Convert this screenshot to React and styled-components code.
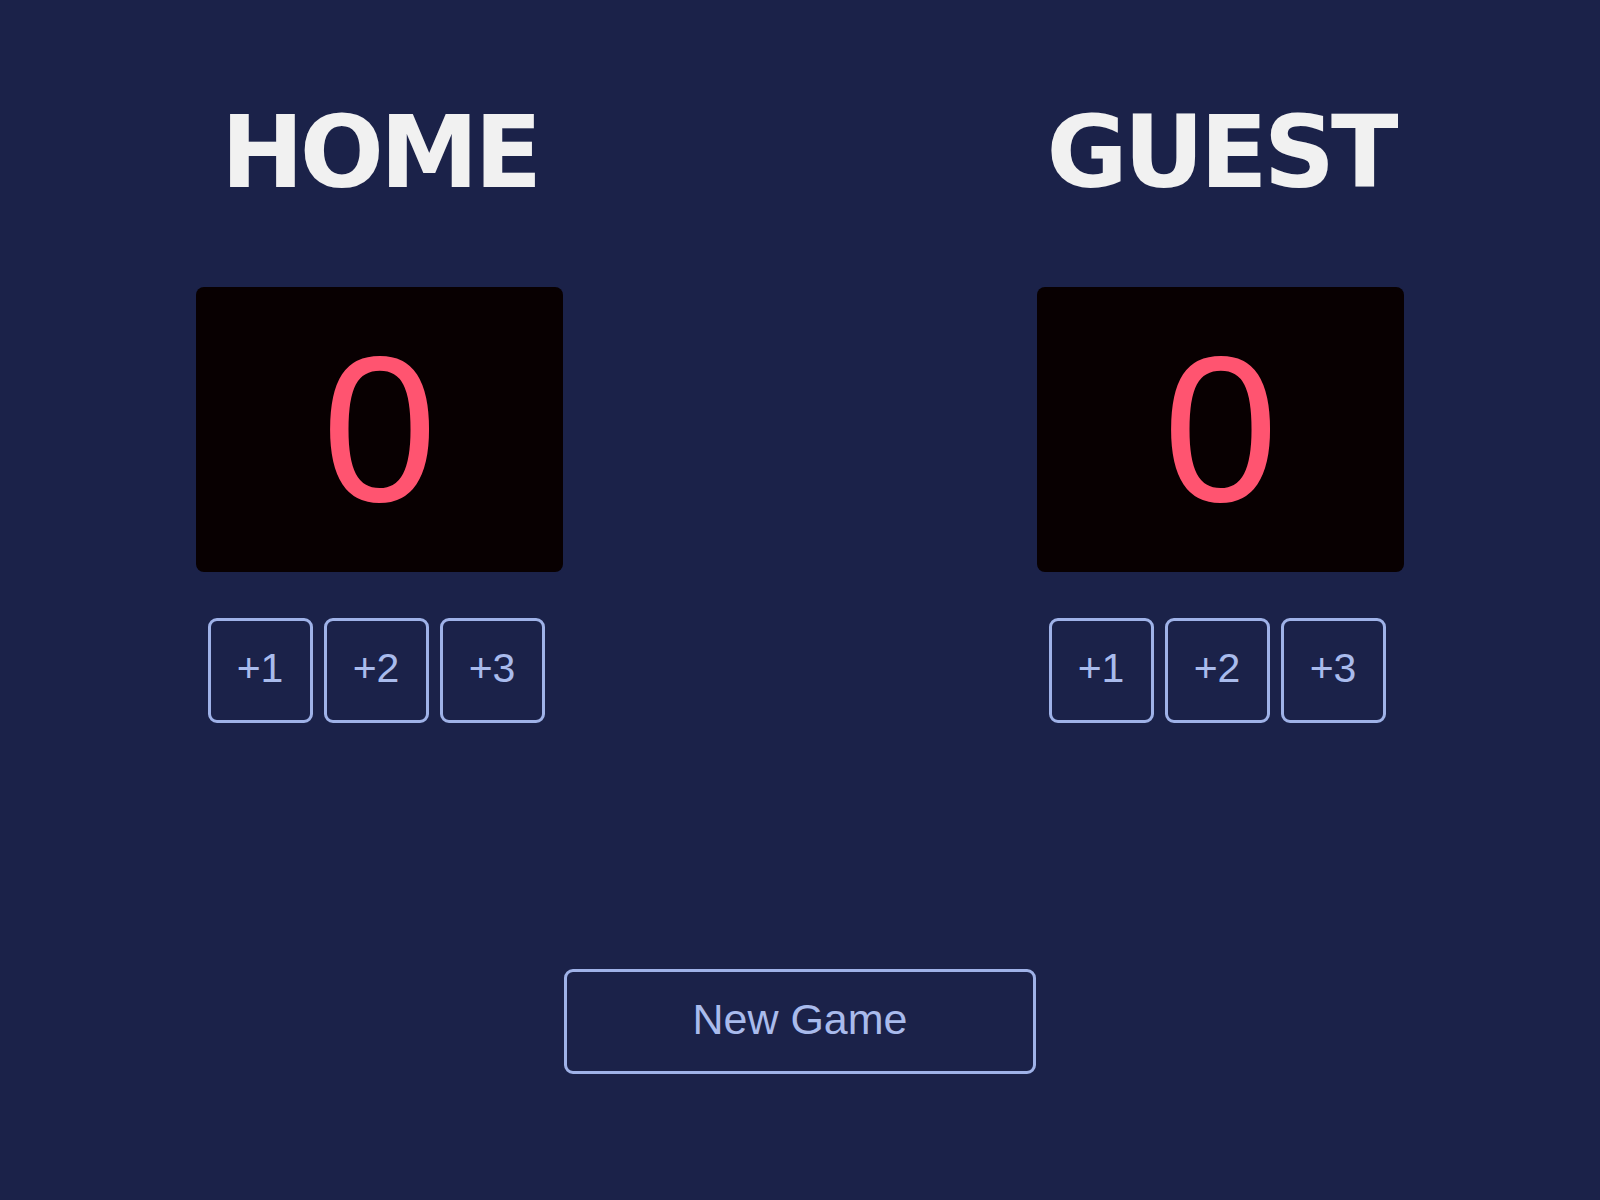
import styled, { createGlobalStyle } from "styled-components";

const GlobalStyle = createGlobalStyle`
  body {
    margin: 0;
    background: #1b2249;
  }
`;

const Page = styled.div`
  display: flex;
  flex-direction: column;
  align-items: center;
  width: 1600px;
  min-height: 1200px;
  padding-top: 103px;
  box-sizing: border-box;
  background: #1b2249;
`;

const Board = styled.div`
  display: flex;
  justify-content: center;
  gap: 474px;
`;

const Team = styled.div`
  display: flex;
  flex-direction: column;
  align-items: center;
  width: 367px;
`;

const TeamName = styled.h2`
  margin: 0;
  color: #f1f1f1;
  font-family: "DejaVu Sans", Verdana, sans-serif;
  font-size: 99px;
  font-weight: 700;
  line-height: 1;
  letter-spacing: -4px;
`;

const ScoreBox = styled.div`
  display: flex;
  justify-content: center;
  align-items: center;
  width: 367px;
  height: 285px;
  margin-top: 85px;
  border-radius: 8px;
  background: #080001;
  color: #ff5470;
  font-family: "Liberation Sans", Arial, sans-serif;
  font-size: 207px;
  line-height: 1;
`;

const Buttons = styled.div`
  display: flex;
  gap: 11px;
  margin-top: 46px;
  margin-right: 7px;
`;

const OutlineButton = styled.button`
  display: flex;
  justify-content: center;
  align-items: center;
  width: ${(p) => p.$width || 105}px;
  height: 105px;
  padding: 0 0 4px;
  border: 3px solid #9fb2e8;
  border-radius: 9px;
  background: transparent;
  color: #a9bbec;
  font-family: "Liberation Sans", Arial, sans-serif;
  font-size: ${(p) => p.$fontSize || 41}px;
  cursor: pointer;
`;

const Footer = styled.div`
  margin-top: 246px;
`;

function App() {
  const teams = ["HOME", "GUEST"];
  return (
    <>
      <GlobalStyle />
      <Page>
        <Board>
          {teams.map((team) => (
            <Team key={team}>
              <TeamName>{team}</TeamName>
              <ScoreBox>0</ScoreBox>
              <Buttons>
                <OutlineButton>+1</OutlineButton>
                <OutlineButton>+2</OutlineButton>
                <OutlineButton>+3</OutlineButton>
              </Buttons>
            </Team>
          ))}
        </Board>
        <Footer>
          <OutlineButton $width={472} $fontSize={43}>
            New Game
          </OutlineButton>
        </Footer>
      </Page>
    </>
  );
}

export default App;
